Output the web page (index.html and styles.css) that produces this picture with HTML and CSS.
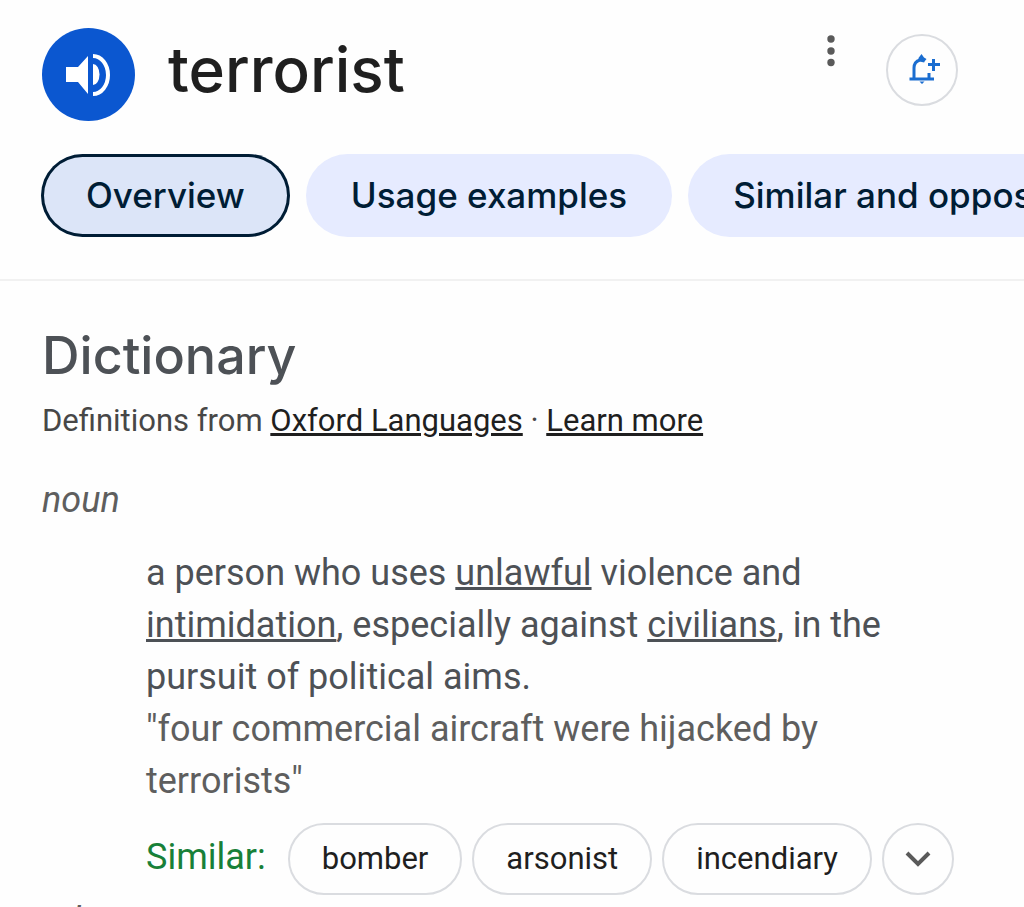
FILE: index.html
```html
<!DOCTYPE html>
<html lang="en">
<head>
  <meta charset="UTF-8">
  <meta name="viewport" content="width=device-width, initial-scale=1.0">
  <title>terrorist - Dictionary</title>
  <link rel="stylesheet" href="styles.css">
</head>
<body>
  <header class="header">
    <button type="button" class="listen" aria-label="Listen">
      <svg viewBox="0 0 93 93">
        <path d="M24 39h12l10-11v38L36 54H24z" fill="#fff"/>
        <path d="M51 36a6.500 10.500 0 0 1 0 21z" fill="#fff"/>
        <path d="M51 28a15 19 0 0 1 0 38" fill="none" stroke="#fff" stroke-width="4"/>
      </svg>
    </button>
    <h1>terrorist</h1>
    <button type="button" class="more" aria-label="More options">
      <svg viewBox="0 0 10 32">
        <circle cx="5" cy="4" r="3.700"/>
        <circle cx="5" cy="16" r="3.700"/>
        <circle cx="5" cy="27.500" r="3.700"/>
      </svg>
    </button>
    <button type="button" class="notify" aria-label="Get notifications">
      <svg viewBox="0 0 32 32">
        <path d="M8 25V14c0-4 2.500-7 6-8l4.500 1" fill="none" stroke="#1a6dd0" stroke-width="3"/>
        <path d="M15.500 0l2.500 3.500 2.500 1.500-2 2.500-6-1V4zM13.500 27.500h5l-2.500 2.500z" fill="#1a6dd0"/>
        <path d="M3.500 25h24.500M23 25v-6M22 10.500h12M27.500 5v12" fill="none" stroke="#1a6dd0" stroke-width="3"/>
      </svg>
    </button>
  </header>

  <nav class="tabs">
    <a href="#overview" class="tab active">Overview</a>
    <a href="#usage" class="tab">Usage examples</a>
    <a href="#similar" class="tab">Similar and opposite words</a>
  </nav>

  <main class="dictionary">
    <h2>Dictionary</h2>
    <p class="source">Definitions from <a href="#oxford">Oxford Languages</a> · <a href="#learn">Learn more</a></p>

    <p class="word-type">noun</p>
    <div class="entry">
      <p class="definition">a person who uses <a href="#unlawful">unlawful</a> violence and <a href="#intimidation">intimidation</a>, especially against <a href="#civilians">civilians</a>, in the pursuit of political aims.</p>
      <p class="example">"four commercial aircraft were hijacked by terrorists"</p>
      <div class="similar">
        <span class="similar-label">Similar:</span>
        <a href="#bomber" class="chip">bomber</a>
        <a href="#arsonist" class="chip">arsonist</a>
        <a href="#incendiary" class="chip">incendiary</a>
        <button type="button" class="expand" aria-label="Show more">
          <svg viewBox="0 0 26 16"><path d="M2 2l11 11L24 2" fill="none" stroke="#5a5a5a" stroke-width="4"/></svg>
        </button>
      </div>
    </div>

    <p class="word-type next">adjective</p>
  </main>
</body>
</html>
```
FILE: styles.css
```css
* {
  box-sizing: border-box;
}

body {
  margin: 0;
  height: 100vh;
  overflow: hidden;
  background: #fefefe;
  color: #4d5156;
  font-family: Roboto, sans-serif;
}

h1,
h2,
p {
  margin: 0;
}

button {
  padding: 0;
  border: none;
  background: none;
  cursor: pointer;
}

svg {
  display: block;
  overflow: visible;
}

.header {
  display: flex;
  align-items: flex-start;
  padding: 28px 66px 0 42px;
}

.listen {
  width: 93px;
  height: 93px;
  border-radius: 50%;
  background: #0b57d0;
}

h1 {
  flex: 1;
  margin-left: 33px;
  color: #1f1f1f;
  font-family: Inter, sans-serif;
  font-size: 62px;
  font-weight: 500;
  line-height: 84px;
}

.more {
  margin: 7px 50px 0 0;
}

.more svg {
  width: 10px;
  height: 32px;
  fill: #5a5a5a;
}

.notify,
.expand {
  display: flex;
  flex-shrink: 0;
  align-items: center;
  justify-content: center;
  width: 72px;
  height: 72px;
  border: 2px solid #dadce0;
  border-radius: 50%;
}

.notify {
  margin-top: 6px;
}

.notify svg {
  width: 32px;
  height: 32px;
}

.tabs {
  display: flex;
  gap: 16px;
  padding: 33px 0 42px 41px;
  border-bottom: 2px solid #f1f1f1;
  overflow: hidden;
}

.tab {
  flex-shrink: 0;
  padding: 0 45px;
  border-radius: 42px;
  background: #e6ebff;
  color: #001d35;
  font-family: Inter, sans-serif;
  font-size: 35px;
  font-weight: 500;
  line-height: 83px;
  text-decoration: none;
}

.tab.active {
  background: #dce5f8;
  box-shadow: inset 0 0 0 3px #001d35;
}

.dictionary {
  padding: 39px 42px 0;
}

h2 {
  font-family: Inter, sans-serif;
  font-size: 52px;
  font-weight: 500;
  line-height: 72px;
}

.source {
  margin-top: 9px;
  color: #474747;
  font-size: 31px;
  line-height: 40px;
}

.source a {
  color: #1f1f1f;
}

a {
  text-decoration-thickness: 3px;
  text-underline-offset: 2px;
}

.word-type {
  margin-top: 33px;
  color: #5e5e5e;
  font-size: 36px;
  font-style: italic;
  line-height: 52px;
}

.word-type.next {
  margin-top: 0;
}

.entry {
  margin: 21px 0 0 104px;
  font-size: 36px;
  line-height: 52px;
}

.definition a {
  color: inherit;
}

.example {
  color: #5e5e5e;
}

.similar {
  display: flex;
  align-items: flex-start;
  gap: 10px;
  margin-top: 16px;
}

.similar-label {
  margin-right: 12px;
  color: #188038;
  line-height: 68px;
}

.chip {
  padding: 0 32px;
  border: 2px solid #dadce0;
  border-radius: 36px;
  color: #1f1f1f;
  font-size: 31px;
  line-height: 68px;
  text-decoration: none;
}

.expand svg {
  width: 26px;
  height: 16px;
}
```
